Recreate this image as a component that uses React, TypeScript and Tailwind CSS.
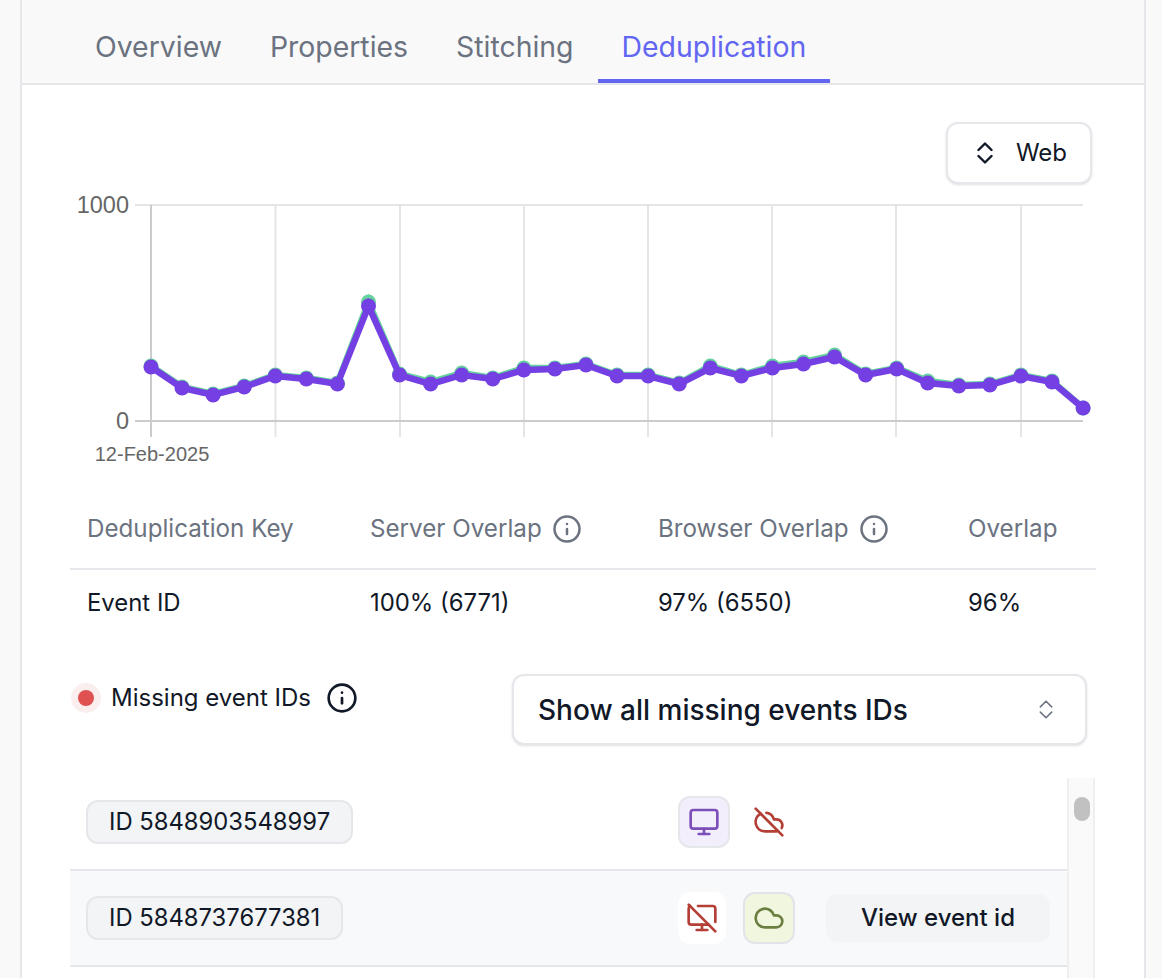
import { Cloud, CloudOff, Info, Monitor, MonitorOff } from 'lucide-react';

const tabs = ['Overview', 'Properties', 'Stitching', 'Deduplication'];

const server = [366, 387, 394, 386, 375, 378, 383, 302, 374, 382, 373, 378, 368, 368, 364, 375, 375, 383, 366, 375, 366, 362, 355, 374, 368, 381, 385, 384, 375, 381, 408];
const browser = [367, 388, 395, 387, 376, 379, 384, 306, 375, 384, 375, 379, 370, 369, 365, 376, 376, 384, 368, 376, 368, 364, 357, 375, 369, 383, 386, 385, 376, 382, 408];
const grid = [275.5, 400, 524, 648, 772, 896, 1021];

const xAt = (i: number) => 151 + i * 31.07;
const toPoints = (ys: number[]) => ys.map((y, i) => `${xAt(i)},${y}`).join(' ');

function UpDown({ className, strokeWidth }: { className: string; strokeWidth: number }) {
  return (
    <svg viewBox="0 0 16 22" fill="none" stroke="currentColor" strokeWidth={strokeWidth} strokeLinecap="round" strokeLinejoin="round" className={className}>
      <path d="M1.5 8 8 1.5 14.5 8" />
      <path d="M1.5 14 8 20.5 14.5 14" />
    </svg>
  );
}

function Chart() {
  return (
    <svg viewBox="70 184 1026 280" className="block w-[1026px] h-[280px]">
      <line x1="135" y1="205" x2="1083" y2="205" stroke="#e5e5e5" strokeWidth="2" />
      {grid.map((x) => (
        <line key={x} x1={x} y1="205" x2={x} y2="437" stroke="#e5e5e5" strokeWidth="2" />
      ))}
      <line x1="151" y1="205" x2="151" y2="437" stroke="#cccccc" strokeWidth="2" />
      <line x1="135" y1="421" x2="1083" y2="421" stroke="#cccccc" strokeWidth="2" />
      <text x="129" y="213" textAnchor="end" fontSize="23.5" fill="#666666" fontFamily="'Liberation Sans', sans-serif">1000</text>
      <text x="129" y="429" textAnchor="end" fontSize="23.5" fill="#666666" fontFamily="'Liberation Sans', sans-serif">0</text>
      <text x="152" y="461" textAnchor="middle" fontSize="20" fill="#666666" fontFamily="'Liberation Sans', sans-serif">12-Feb-2025</text>
      <polyline points={toPoints(server)} fill="none" stroke="#66d19e" strokeWidth="6.5" />
      {server.map((y, i) => (
        <circle key={i} cx={xAt(i)} cy={y} r="7.5" fill="#66d19e" />
      ))}
      <polyline points={toPoints(browser)} fill="none" stroke="#7540e3" strokeWidth="6.5" />
      {browser.map((y, i) => (
        <circle key={i} cx={xAt(i)} cy={y} r="7.5" fill="#7540e3" />
      ))}
    </svg>
  );
}

function IdPill({ id }: { id: string }) {
  return (
    <span className="h-[44px] px-[21px] flex items-center rounded-[12px] border-2 border-[#e5e7eb] bg-[#f3f4f6] text-[23.8px] text-[#111827]">
      ID {id}
    </span>
  );
}

export default function App() {
  return (
    <div className="w-[1162px] h-[978px] overflow-hidden bg-[#f9f9fa] pl-[20px] pr-[16px] font-['Inter',sans-serif]">
      <div className="h-full bg-white border-x-2 border-[#e5e7eb]">
        <div className="h-[85px] bg-[#f9f9fa] border-b-2 border-[#e5e7eb] pl-[49px] flex">
          {tabs.map((t) => (
            <div
              key={t}
              className={
                t === 'Deduplication'
                  ? 'h-[83px] px-[24px] pt-[28px] text-[28.4px] leading-[38px] text-[#6366f1] border-b-4 border-[#6366f1]'
                  : 'h-[83px] px-[24px] pt-[28px] text-[28.4px] leading-[38px] text-[#6b7280]'
              }
            >
              {t}
            </div>
          ))}
        </div>

        <div className="px-[48px]">
          <div className="pt-[37px] flex justify-end pr-[4px]">
            <button className="w-[146px] h-[62px] pl-[6px] flex items-center justify-center gap-[23px] rounded-[12px] border-2 border-[#e5e7eb] bg-white shadow-sm text-[24px] text-[#111827]">
              <UpDown className="w-[16px] h-[22px]" strokeWidth={2.4} />
              Web
            </button>
          </div>
          <Chart />

          <div className="h-[25px]" />
          <div className="h-[81px] pt-[2px] border-b-2 border-[#e5e7eb] flex items-center text-[24.2px] text-[#6b7280]">
            <div className="w-[300px] pl-[17px]">Deduplication Key</div>
            <div className="w-[288px] flex items-center gap-[10px]">
              Server Overlap <Info className="w-[30px] h-[30px]" strokeWidth={2} />
            </div>
            <div className="w-[310px] flex items-center gap-[10px]">
              Browser Overlap <Info className="w-[30px] h-[30px]" strokeWidth={2} />
            </div>
            <div>Overlap</div>
          </div>
          <div className="h-[63px] pt-[2px] flex items-center text-[23.9px] text-[#111827]">
            <div className="w-[300px] pl-[17px]">Event ID</div>
            <div className="w-[288px]">100% (6771)</div>
            <div className="w-[310px]">97% (6550)</div>
            <div>96%</div>
          </div>

          <div className="mt-[41px] flex justify-between items-start pr-[9px]">
            <div className="pt-[6px] flex items-center text-[24px] text-[#111827]">
              <span className="ml-[1px] w-[30px] h-[30px] rounded-full bg-[#fbeeee] flex items-center justify-center">
                <span className="w-[16px] h-[16px] rounded-full bg-[#e05252]" />
              </span>
              <span className="ml-[10px]">Missing event IDs</span>
              <Info className="ml-[15px] w-[32px] h-[32px]" strokeWidth={2} />
            </div>
            <div className="w-[575px] h-[71px] pl-[24px] pr-[32px] flex items-center justify-between rounded-[12px] border-2 border-[#e5e7eb] bg-white shadow-sm text-[28px] font-medium text-[#111827]">
              Show all missing events IDs
              <UpDown className="w-[14px] h-[21px] text-[#6b7280]" strokeWidth={1.8} />
            </div>
          </div>

          <div className="mt-[33px] flex">
            <div className="w-[997px]">
              <div className="h-[93px] pb-[4px] pl-[16px] pr-[17px] flex items-center border-b-2 border-[#e5e7eb]">
                <IdPill id="5848903548997" />
                <div className="ml-auto w-[372px] flex items-center gap-[13px]">
                  <span className="w-[52px] h-[52px] flex items-center justify-center rounded-[12px] border-2 border-[#e5e7eb] bg-[#f3eefc]">
                    <Monitor className="w-[32px] h-[32px] text-[#7c4fb8]" strokeWidth={2} />
                  </span>
                  <span className="w-[52px] h-[52px] flex items-center justify-center">
                    <CloudOff className="w-[32px] h-[32px] text-[#b33f36]" strokeWidth={2} />
                  </span>
                </div>
              </div>
              <div className="h-[96px] pl-[16px] pr-[17px] flex items-center bg-[#f8f9fb] border-b-2 border-[#e5e7eb]">
                <IdPill id="5848737677381" />
                <div className="ml-auto w-[372px] flex items-center">
                  <span className="w-[48px] h-[52px] flex items-center justify-center rounded-[12px] bg-white">
                    <MonitorOff className="w-[32px] h-[32px] text-[#b33f36]" strokeWidth={2} />
                  </span>
                  <span className="ml-[17px] w-[52px] h-[52px] flex items-center justify-center rounded-[12px] border-2 border-[#e1e4ea] bg-[#f1f6df]">
                    <Cloud className="w-[32px] h-[32px] text-[#6b8040]" strokeWidth={2} />
                  </span>
                  <span className="ml-[31px] w-[224px] h-[48px] flex items-center justify-center rounded-[12px] bg-[#f3f4f6] text-[24px] font-medium text-[#111827]">
                    View event id
                  </span>
                </div>
              </div>
            </div>
            <div className="w-[28px] h-[200px] pt-[19px] pl-[2px] flex justify-center bg-[#fafafa] border-x-2 border-[#efefef]">
              <div className="w-[16px] h-[24px] rounded-full bg-[#c1c1c1]" />
            </div>
          </div>
        </div>
      </div>
    </div>
  );
}
